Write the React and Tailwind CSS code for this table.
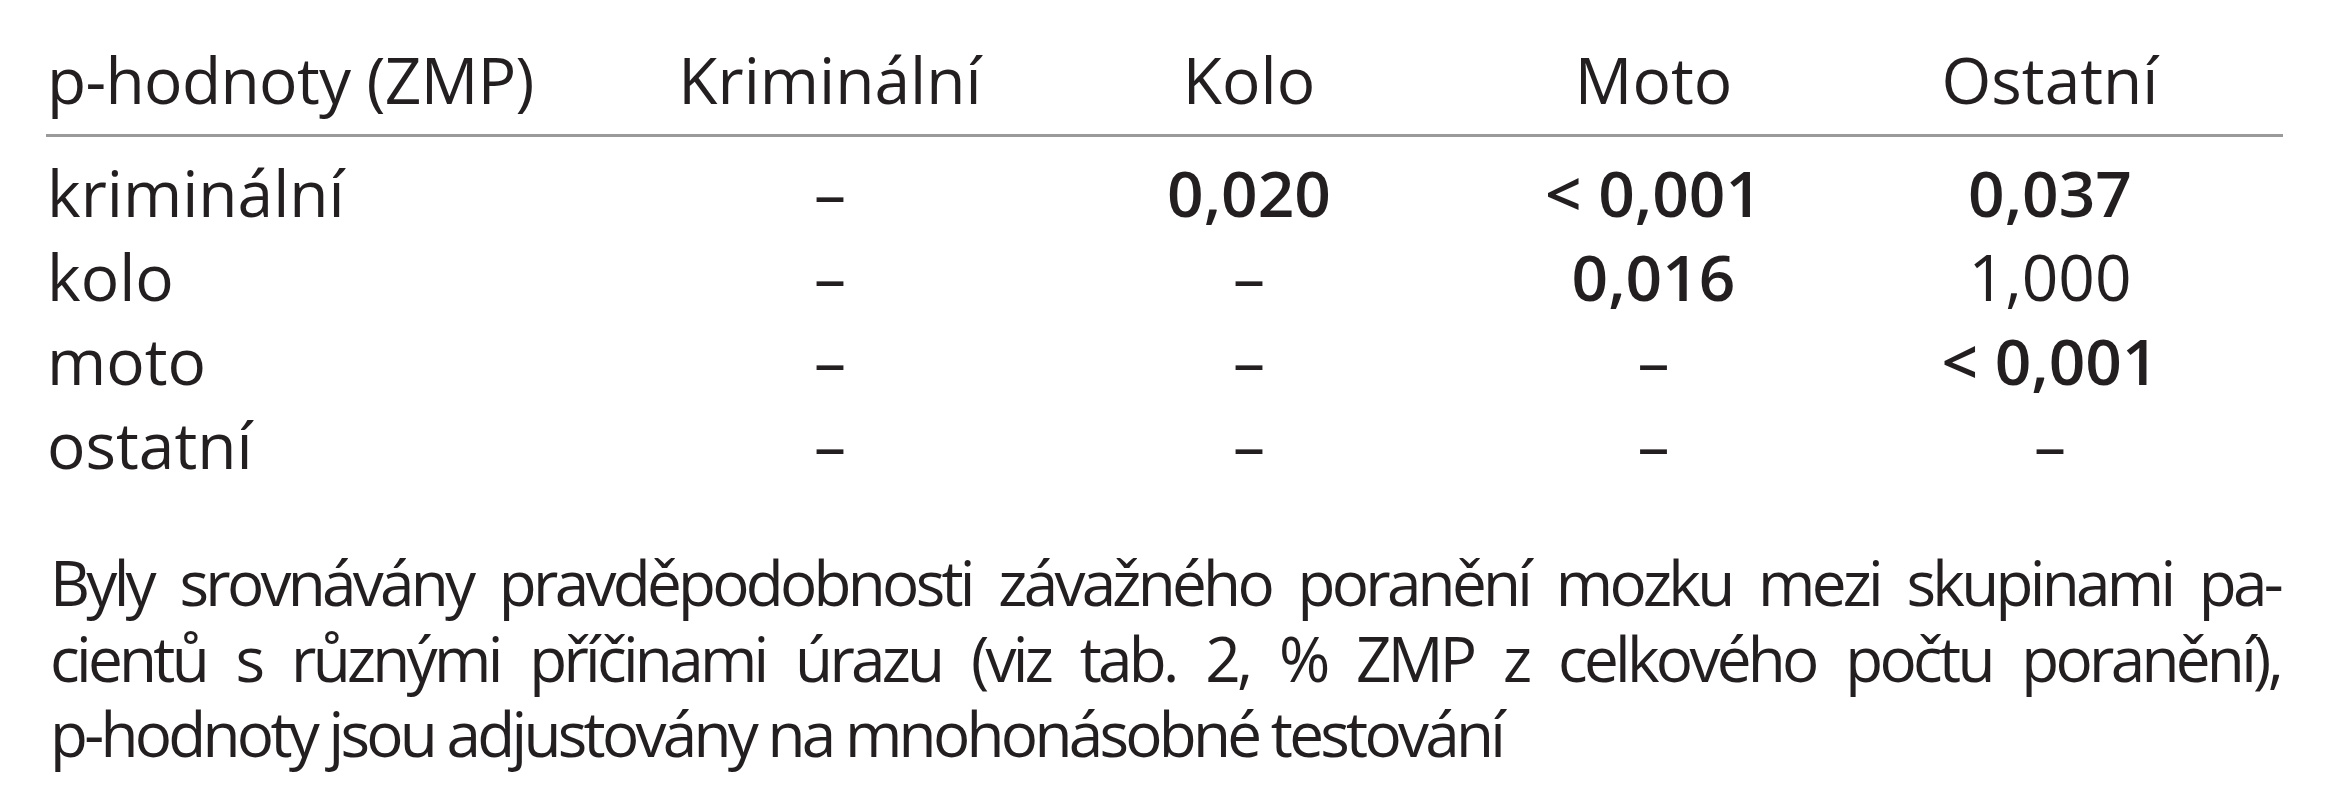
const columns = ['Kriminální', 'Kolo', 'Moto', 'Ostatní'];

// each cell: [text, bold]
const rows = [
  { label: 'kriminální', cells: [['–'], ['0,020', true], ['< 0,001', true], ['0,037', true]] },
  { label: 'kolo', cells: [['–'], ['–'], ['0,016', true], ['1,000']] },
  { label: 'moto', cells: [['–'], ['–'], ['–'], ['< 0,001', true]] },
  { label: 'ostatní', cells: [['–'], ['–'], ['–'], ['–']] },
];

const grid = 'grid grid-cols-[571px_426px_412px_397px_396px]';

const App = () => {
  return (
    <div className="min-h-[800px] w-[2325px] bg-white pl-[46px] pt-[40px] font-['Open_Sans',sans-serif] text-[64px] text-[#231f20]">
      <div className="w-[2237px]">
        {/* Header */}
        <div className={`${grid} border-b-[3px] border-[#9a9a9a] pb-[14px] leading-[80px]`}>
          <div className="pl-[1px] tracking-[-0.01em]">p-hodnoty (ZMP)</div>
          {columns.map((col) => (
            <div key={col} className="text-center">
              {col}
            </div>
          ))}
        </div>

        {/* Body */}
        <div className="pt-[14px] leading-[84px]">
          {rows.map((row) => (
            <div key={row.label} className={grid}>
              <div className="pl-[1px]">{row.label}</div>
              {row.cells.map(([value, bold], i) => (
                <div key={i} className={`text-center ${bold ? 'font-semibold' : ''}`}>
                  {value}
                </div>
              ))}
            </div>
          ))}
        </div>
      </div>

      {/* Note */}
      <div className="mt-[58px] w-[2234px] pl-[4px] text-[62px] leading-[75.5px] tracking-[-0.06em]">
        <p className="text-justify [text-align-last:justify]">
          Byly srovnávány pravděpodobnosti závažného poranění mozku mezi skupinami pa-
        </p>
        <p className="text-justify [text-align-last:justify]">
          cientů s různými příčinami úrazu (viz tab. 2, % ZMP z celkového počtu poranění),
        </p>
        <p className="whitespace-nowrap">p-hodnoty jsou adjustovány na mnohonásobné testování</p>
      </div>
    </div>
  );
};

export default App;
